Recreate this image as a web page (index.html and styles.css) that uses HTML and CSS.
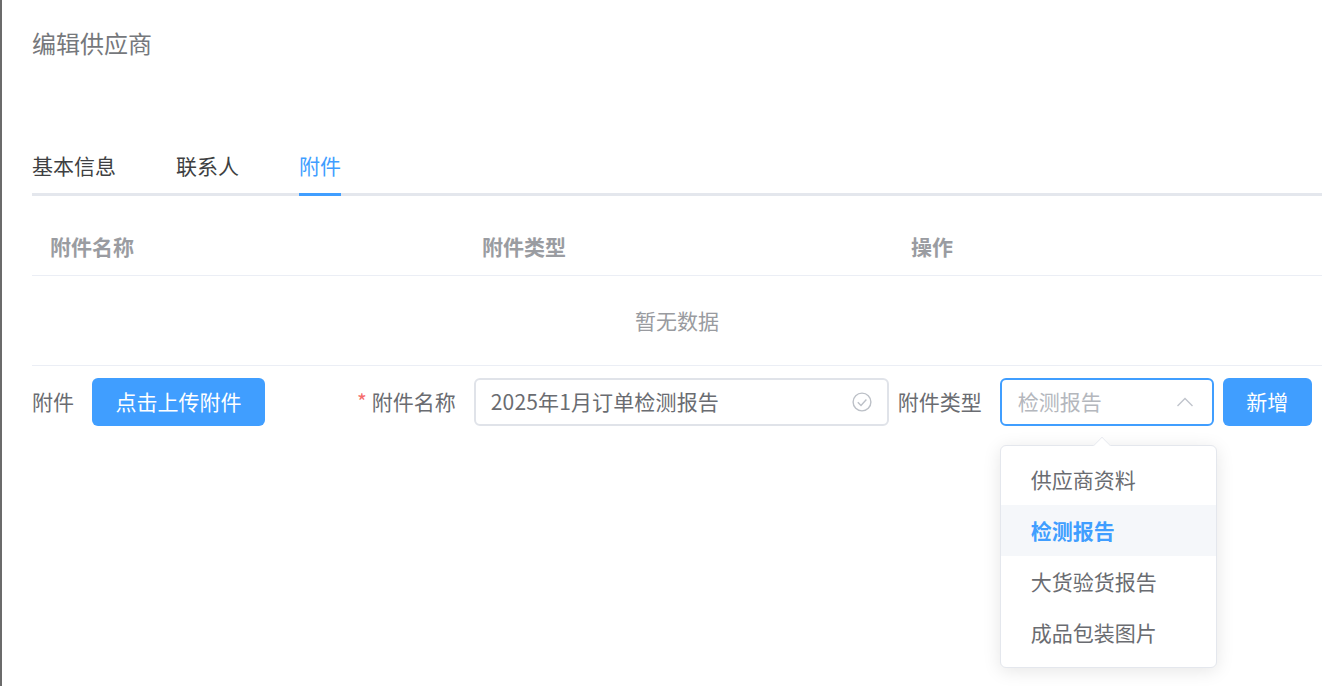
FILE: index.html
```html
<!DOCTYPE html>
<html lang="zh-CN">
<head>
<meta charset="utf-8">
<title>编辑供应商</title>
<link rel="stylesheet" href="styles.css">
</head>
<body>
<main class="page">
  <h1 class="title">编辑供应商</h1>
  <nav class="tabs">
    <span class="tab">基本信息</span>
    <span class="tab">联系人</span>
    <span class="tab active">附件</span>
  </nav>
  <section class="table">
    <div class="thead">
      <span>附件名称</span>
      <span>附件类型</span>
      <span>操作</span>
    </div>
    <div class="empty">暂无数据</div>
  </section>
  <form class="form">
    <label class="label">附件</label>
    <button type="button" class="btn upload">点击上传附件</button>
    <label class="label name-label"><span class="req">*</span>附件名称</label>
    <div class="input name-input">
      <span class="value">2025年1月订单检测报告</span>
      <svg class="check" width="20" height="20" viewBox="0 0 20 20" fill="none" stroke="#bcc0c7" stroke-width="1.4">
        <circle cx="10" cy="10" r="8.9"/>
        <path d="M5.8 10.2l3.2 3.2 5.4-5.8"/>
      </svg>
    </div>
    <label class="label type-label">附件类型</label>
    <div class="select-wrap">
      <div class="input select">
        <span class="placeholder">检测报告</span>
        <svg class="chevron" width="18" height="10" viewBox="0 0 18 10" fill="none" stroke="#c0c4cc" stroke-width="1.4">
          <path d="M1.5 9L9 1.5 16.5 9"/>
        </svg>
      </div>
      <div class="dropdown">
        <span class="arrow"></span>
        <div class="option">供应商资料</div>
        <div class="option selected">检测报告</div>
        <div class="option">大货验货报告</div>
        <div class="option">成品包装图片</div>
      </div>
    </div>
    <button type="button" class="btn add">新增</button>
  </form>
</main>
</body>
</html>
```
FILE: styles.css
```css
* { box-sizing: border-box; }
html, body { margin: 0; height: 100%; overflow: hidden; background: #fff; }
body {
  font-family: "Noto Sans CJK SC", "Liberation Sans", sans-serif;
  font-size: 21px;
  color: #6a6c71;
  border-left: 2px solid #6b6b6b;
}
.page { padding: 0 21px 0 30px; }
.title {
  margin: 0;
  padding-top: 25px;
  height: 142px;
  font-size: 24px;
  line-height: 36px;
  font-weight: 400;
  color: #76787c;
}
.tabs {
  display: flex;
  gap: 60px;
  height: 54px;
  border-bottom: 3px solid #e4e7ed;
}
.tab {
  height: 54px;
  line-height: 47px;
  color: #3e3f42;
}
.tab.active {
  color: #409eff;
  border-bottom: 3px solid #409eff;
}
.thead {
  display: grid;
  grid-template-columns: 432px 429px 1fr;
  height: 80px;
  align-items: center;
  padding-top: 21px;
  font-weight: 700;
  color: #9a9ca1;
  border-bottom: 1px solid #ebeef5;
}
.thead span { padding-left: 18px; }
.empty {
  height: 90px;
  line-height: 88px;
  text-align: center;
  color: #999ba0;
  border-bottom: 1px solid #ebeef5;
}
.form {
  display: flex;
  align-items: center;
  height: 48px;
  margin-top: 12px;
}
.label { line-height: 46px; height: 48px; white-space: nowrap; }
.btn {
  height: 48px;
  border: 0;
  border-radius: 6px;
  background: #409eff;
  color: #fff;
  font: inherit;
  padding: 0 0 2px;
}
.upload { width: 173px; margin-left: 18px; }
.add { width: 89px; margin-left: 9px; }
.name-label { margin-left: 92px; }
.req { color: #f56c6c; margin-right: 5px; }
.input {
  display: flex;
  align-items: center;
  justify-content: space-between;
  height: 48px;
  border: 2px solid #e0e3e9;
  border-radius: 6px;
  background: #fff;
}
.name-input { width: 415px; margin-left: 18px; padding: 0 15px; }
.value { color: #6a6c71; margin-bottom: 2px; letter-spacing: .14px; }
.check { flex: none; }
.type-label { margin-left: 9px; }
.select-wrap { position: relative; width: 214px; margin-left: 18px; }
.select { border-color: #409eff; padding: 0 18px 0 16px; }
.placeholder { color: #b4b7bd; margin-bottom: 2px; }
.dropdown {
  position: absolute;
  top: 67px;
  left: 0;
  width: 217px;
  height: 223px;
  padding: 8px 0;
  background: #fff;
  border: 1px solid #e4e7ed;
  border-radius: 6px;
  box-shadow: 0 3px 18px rgba(0, 0, 0, .1);
}
.arrow {
  position: absolute;
  top: -9px;
  left: 92px;
  width: 18px;
  height: 18px;
  background: #fff;
  border: 1px solid #e4e7ed;
  border-right-color: transparent;
  border-bottom-color: transparent;
  transform: rotate(45deg) scale(.72);
}
.option {
  height: 51px;
  line-height: 50px;
  padding-left: 30px;
  color: #6a6c71;
}
.option.selected {
  background: #f5f7fa;
  color: #409eff;
  font-weight: 700;
}
```
